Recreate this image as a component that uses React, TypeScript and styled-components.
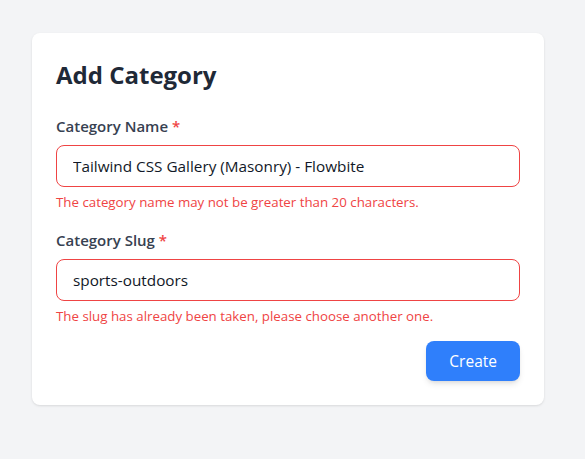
import React from 'react';
import styled, { createGlobalStyle } from 'styled-components';

const GlobalStyle = createGlobalStyle`
  html, body {
    margin: 0;
    padding: 0;
    background: #f3f4f6;
  }
  body {
    font-family: 'Open Sans', 'Noto Sans', sans-serif;
    color: #1f2937;
  }
  * { box-sizing: border-box; }
`;

const Page = styled.div`
  min-height: 459px;
  padding: 33px 32px;
`;

const Card = styled.form`
  width: 512px;
  background: #ffffff;
  border-radius: 8px;
  box-shadow: 0 1px 3px rgba(0, 0, 0, 0.08), 0 1px 2px rgba(0, 0, 0, 0.04);
  padding: 24px;
  display: flex;
  flex-direction: column;
`;

const Title = styled.h2`
  margin: 0 0 23px;
  font-size: 24px;
  line-height: 36px;
  font-weight: 700;
  color: #1f2937;
`;

const Field = styled.div`
  display: flex;
  flex-direction: column;

  & + & {
    margin-top: 19px;
  }
`;

const Label = styled.label`
  font-size: 15px;
  line-height: 20px;
  font-weight: 600;
  color: #374151;
  margin-bottom: 9px;
`;

const Required = styled.span`
  color: #ef4444;
`;

const Input = styled.input<{ $invalid?: boolean }>`
  width: 100%;
  height: 42px;
  padding: 0 16px;
  border: 1px solid ${p => (p.$invalid ? '#ef4444' : '#d1d5db')};
  border-radius: 8px;
  font-family: inherit;
  font-size: 15.3px;
  color: #111827;
  background: #fff;
  outline: none;
`;

const Error = styled.p`
  margin: 6px 0 0;
  font-size: 13.3px;
  line-height: 18px;
  color: #ef4444;
`;

const Actions = styled.div`
  display: flex;
  justify-content: flex-end;
  margin-top: 16px;
`;

const Button = styled.button`
  height: 40px;
  padding: 0 23px;
  border: none;
  border-radius: 8px;
  background: #2f7ffb;
  color: #fff;
  font-family: inherit;
  font-size: 15.5px;
  box-shadow: 0 4px 6px -1px rgba(0, 0, 0, 0.1), 0 2px 4px -2px rgba(0, 0, 0, 0.1);
  cursor: pointer;
`;

export default function App() {
  return (
    <Page>
      <GlobalStyle />
      <Card onSubmit={e => e.preventDefault()}>
        <Title>Add Category</Title>
        <Field>
          <Label>
            Category Name <Required>*</Required>
          </Label>
          <Input $invalid defaultValue="Tailwind CSS Gallery (Masonry) - Flowbite" />
          <Error>The category name may not be greater than 20 characters.</Error>
        </Field>
        <Field>
          <Label>
            Category Slug <Required>*</Required>
          </Label>
          <Input $invalid defaultValue="sports-outdoors" />
          <Error>The slug has already been taken, please choose another one.</Error>
        </Field>
        <Actions>
          <Button type="submit">Create</Button>
        </Actions>
      </Card>
    </Page>
  );
}
